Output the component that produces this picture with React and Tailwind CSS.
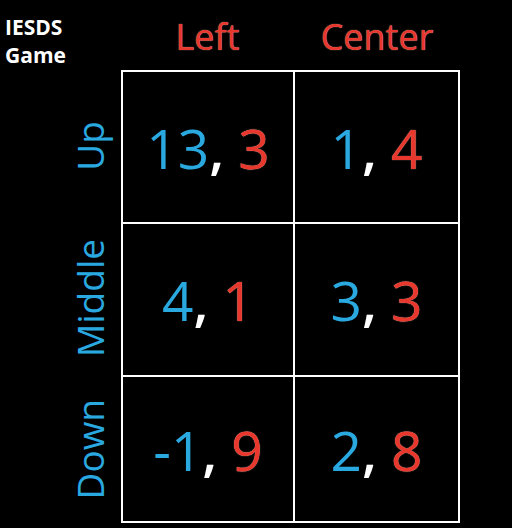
const cells = [
  ["13", "3"],
  ["1", "4"],
  ["4", "1"],
  ["3", "3"],
  ["-1", "9"],
  ["2", "8"],
];

const rows = [
  { label: "Up", h: "h-[152px]" },
  { label: "Middle", h: "h-[153px]" },
  { label: "Down", h: "h-[148px]" },
];

const Payoff = ({ a, b }) => (
  <div className="bg-black flex items-center justify-center text-[55px] leading-none">
    <span className="text-[#2aa9e0]">{a}</span>
    <span className="text-white font-semibold">,</span>
    <span className="text-[#e8372c] ml-[14px] [text-shadow:0_0_1px_#ffc2b8]">{b}</span>
  </div>
);

export default function App() {
  return (
    <div className="w-[512px] h-[528px] bg-black flex font-['Open_Sans',sans-serif]">
      <div className="w-[121px] flex flex-col">
        <div className="h-[70px] pt-[13px] pl-[5px] text-white font-bold text-[21px] leading-[28px]">
          IESDS
          <br />
          Game
        </div>
        {rows.map((r) => (
          <div key={r.label} className={`${r.h} flex items-center justify-end pr-[13px]`}>
            <span className="[writing-mode:vertical-rl] rotate-180 text-[#2aa9e0] text-[37px] leading-none">
              {r.label}
            </span>
          </div>
        ))}
      </div>
      <div className="flex flex-col">
        <div className="h-[70px] grid grid-cols-[173px_166px] pt-[19px] text-[#e8372c] text-[36px] leading-none text-center [text-shadow:0_0_1px_#ffc2b8]">
          <div>Left</div>
          <div>Center</div>
        </div>
        <div className="w-[339px] h-[453px] bg-white p-[2px] grid grid-cols-[170px_163px] grid-rows-[150px_151px_144px] gap-[2px]">
          {cells.map(([a, b], i) => (
            <Payoff key={i} a={a} b={b} />
          ))}
        </div>
      </div>
    </div>
  );
}
